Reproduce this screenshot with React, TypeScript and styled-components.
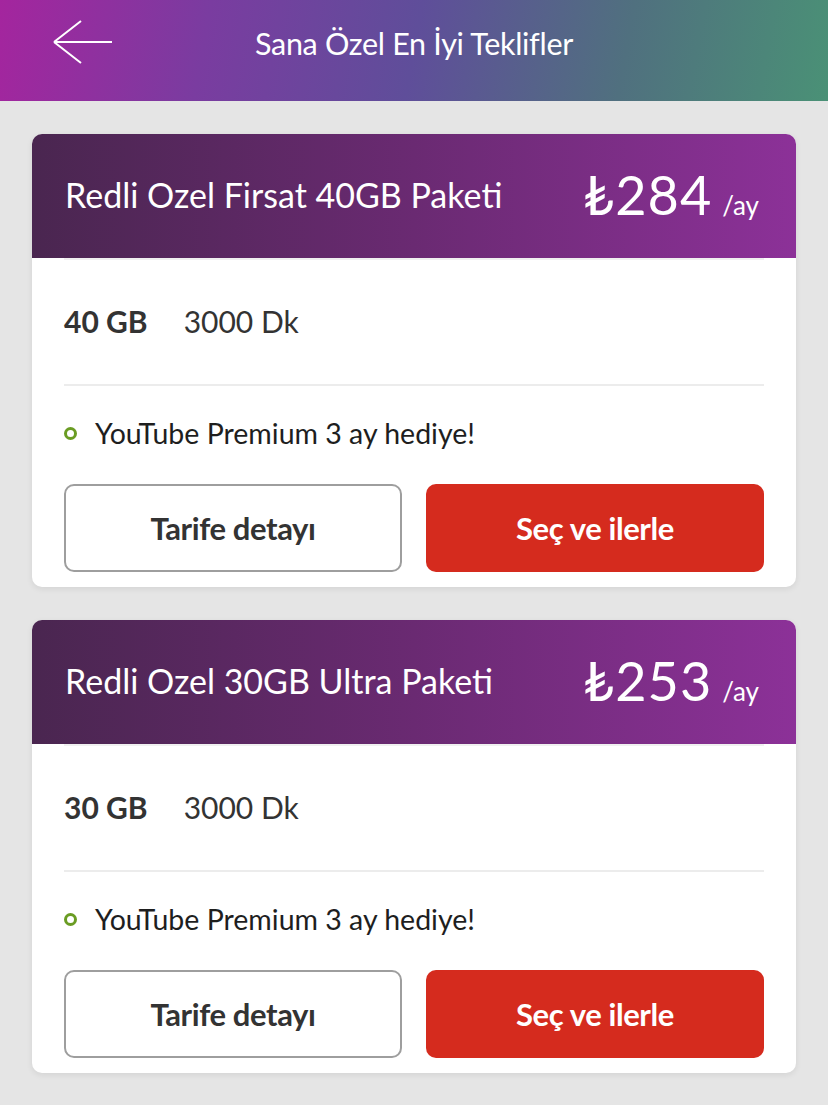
import React from "react";
import styled, { createGlobalStyle } from "styled-components";

const Global = createGlobalStyle`
  html, body { margin: 0; padding: 0; background: #e5e5e5; }
  body { font-family: Lato, "Noto Sans", sans-serif; -webkit-font-smoothing: antialiased; }
  * { box-sizing: border-box; }
`;

const Page = styled.div`
  width: 828px;
  min-height: 1105px;
  background: #e5e5e5;
`;

const TopBar = styled.header`
  height: 101px;
  background: linear-gradient(100deg, #a4259e 0%, #7a3ca0 25%, #5f4e9a 50%, #50707f 75%, #4a9176 100%);
  display: flex;
  align-items: center;
  position: relative;
  padding-bottom: 16px;
`;

const BackButton = styled.button`
  position: absolute;
  left: 52px;
  top: 20px;
  width: 62px;
  height: 46px;
  border: none;
  background: none;
  padding: 0;
  cursor: pointer;
`;

const TopTitle = styled.h1`
  flex: 1;
  margin: 0;
  text-align: center;
  color: #fff;
  font-weight: 400;
  font-size: 30.5px;
  letter-spacing: -0.3px;
`;

const List = styled.main`
  display: flex;
  flex-direction: column;
  gap: 33px;
  padding: 33px 32px 0;
`;

const Card = styled.section`
  background: #fff;
  border-radius: 10px;
  overflow: hidden;
  box-shadow: 0 2px 6px rgba(0, 0, 0, 0.08);
`;

const CardHeader = styled.div`
  height: 124px;
  display: flex;
  align-items: center;
  justify-content: space-between;
  padding: 0 37px 4px 33px;
  background: linear-gradient(90deg, #4a2650 0%, #6a2a72 50%, #8c3198 100%);
  color: #fff;
`;

const PlanName = styled.h2`
  margin: 0;
  font-weight: 400;
  font-size: 34px;
`;

const Price = styled.div`
  display: flex;
  align-items: baseline;
  gap: 10px;
`;

const Amount = styled.span`
  font-size: 54px;
  font-weight: 400;
  letter-spacing: 1px;
`;

const Per = styled.span`
  font-size: 26px;
`;

const CardBody = styled.div`
  padding: 0 32px 15px;
`;

const Specs = styled.div`
  height: 128px;
  display: flex;
  align-items: center;
  gap: 36px;
  border-top: 2px solid #f0f0f0;
  border-bottom: 2px solid #ececec;
  color: #333;
  font-size: 30px;
  padding-bottom: 2px;
`;

const Data = styled.span`
  font-weight: 700;
`;

const Perk = styled.div`
  display: flex;
  align-items: center;
  gap: 18px;
  height: 98px;
  padding-bottom: 4px;
  color: #1e1e1e;
  font-size: 28.5px;
`;

const Dot = styled.span`
  width: 13px;
  height: 13px;
  border-radius: 50%;
  border: 3.5px solid #6a9c23;
  flex: none;
`;

const Actions = styled.div`
  display: grid;
  grid-template-columns: 1fr 1fr;
  gap: 24px;
`;

const Btn = styled.button<{ $primary?: boolean }>`
  height: 88px;
  border-radius: 10px;
  font-family: Lato, "Noto Sans", sans-serif;
  font-weight: 700;
  font-size: 31px;
  letter-spacing: -0.4px;
  cursor: pointer;
  border: ${(p) => (p.$primary ? "none" : "2px solid #9e9e9e")};
  background: ${(p) => (p.$primary ? "#d52b1e" : "#fff")};
  color: ${(p) => (p.$primary ? "#fff" : "#333")};
`;

const plans = [
  { name: "Redli Ozel Firsat 40GB Paketi", price: "284", data: "40 GB", min: "3000 Dk" },
  { name: "Redli Ozel 30GB Ultra Paketi", price: "253", data: "30 GB", min: "3000 Dk" },
];

export default function App() {
  return (
    <Page>
      <Global />
      <TopBar>
        <BackButton aria-label="Geri">
          <svg width="62" height="46" viewBox="0 0 62 46" fill="none">
            <path d="M2 22 H60 M2 22 L29 1 M2 22 L29 43" stroke="#fff" strokeWidth="2" />
          </svg>
        </BackButton>
        <TopTitle>Sana Özel En İyi Teklifler</TopTitle>
      </TopBar>
      <List>
        {plans.map((p) => (
          <Card key={p.name}>
            <CardHeader>
              <PlanName>{p.name}</PlanName>
              <Price>
                <Amount>₺{p.price}</Amount>
                <Per>/ay</Per>
              </Price>
            </CardHeader>
            <CardBody>
              <Specs>
                <Data>{p.data}</Data>
                <span>{p.min}</span>
              </Specs>
              <Perk>
                <Dot />
                YouTube Premium 3 ay hediye!
              </Perk>
              <Actions>
                <Btn>Tarife detayı</Btn>
                <Btn $primary>Seç ve ilerle</Btn>
              </Actions>
            </CardBody>
          </Card>
        ))}
      </List>
    </Page>
  );
}
